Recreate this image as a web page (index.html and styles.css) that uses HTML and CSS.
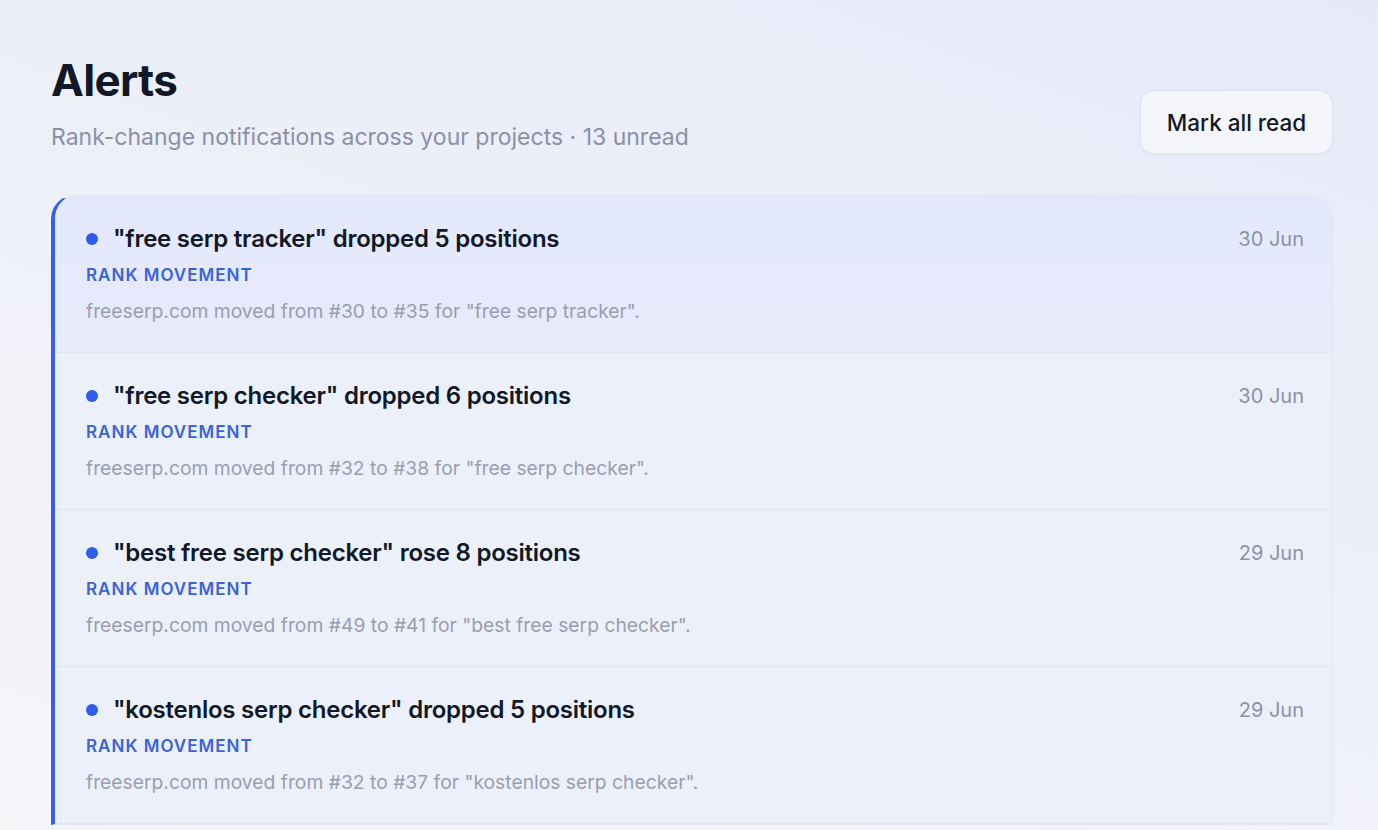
FILE: index.html
```html
<!DOCTYPE html>
<html lang="en">
<head>
<meta charset="utf-8">
<title>Alerts</title>
<link rel="stylesheet" href="styles.css">
</head>
<body>
<main class="page">
  <header class="header">
    <div class="header-text">
      <h1 class="title">Alerts</h1>
      <p class="subtitle">Rank-change notifications across your projects · 13 unread</p>
    </div>
    <button class="btn">Mark all read</button>
  </header>
  <section class="card">
    <article class="row row-active">
      <div class="row-main">
        <div class="row-title"><span class="dot"></span>"free serp tracker" dropped 5 positions</div>
        <div class="row-label">RANK MOVEMENT</div>
        <div class="row-body">freeserp.com moved from #30 to #35 for "free serp tracker".</div>
      </div>
      <div class="row-date">30 Jun</div>
    </article>
    <article class="row">
      <div class="row-main">
        <div class="row-title"><span class="dot"></span>"free serp checker" dropped 6 positions</div>
        <div class="row-label">RANK MOVEMENT</div>
        <div class="row-body">freeserp.com moved from #32 to #38 for "free serp checker".</div>
      </div>
      <div class="row-date">30 Jun</div>
    </article>
    <article class="row">
      <div class="row-main">
        <div class="row-title"><span class="dot"></span>"best free serp checker" rose 8 positions</div>
        <div class="row-label">RANK MOVEMENT</div>
        <div class="row-body">freeserp.com moved from #49 to #41 for "best free serp checker".</div>
      </div>
      <div class="row-date">29 Jun</div>
    </article>
    <article class="row">
      <div class="row-main">
        <div class="row-title"><span class="dot"></span>"kostenlos serp checker" dropped 5 positions</div>
        <div class="row-label">RANK MOVEMENT</div>
        <div class="row-body">freeserp.com moved from #32 to #37 for "kostenlos serp checker".</div>
      </div>
      <div class="row-date">29 Jun</div>
    </article>
  </section>
</main>
</body>
</html>
```
FILE: styles.css
```css
* { box-sizing: border-box; }
html, body { margin: 0; padding: 0; }
body {
  font-family: Inter, "Noto Sans", "Liberation Sans", sans-serif;
  background: linear-gradient(200deg, #e6eaf8 0%, #eef0f8 45%, #f5f6f8 100%);
  height: 830px;
  color: #111827;
  overflow: hidden;
}
.page {
  padding: 54px 45px 0 51px;
}
.header {
  display: flex;
  justify-content: space-between;
  align-items: flex-end;
}
.title {
  margin: 0;
  font-size: 44px;
  line-height: 52px;
  font-weight: 700;
  letter-spacing: -0.015em;
  color: #111827;
}
.subtitle {
  margin: 16px 0 0;
  font-size: 23px;
  line-height: 30px;
  color: #8a91a5;
}
.btn {
  font-family: inherit;
  font-size: 22.5px;
  font-weight: 500;
  color: #111827;
  background: #f4f6fc;
  border: 1px solid #e0e4ee;
  border-radius: 14px;
  width: 193px;
  height: 64px;
  margin-bottom: -2px;
  box-shadow: 0 1px 2px rgba(20, 30, 60, 0.04);
}
.card {
  margin-top: 43px;
  border: 1px solid #e2e6f2;
  border-left: 4px solid #3461e8;
  border-radius: 24px 24px 0 0;
  background: #ecf0fb;
  overflow: hidden;
}
.row {
  display: flex;
  justify-content: space-between;
  align-items: flex-start;
  padding: 28px 28px 29px 31px;
  border-bottom: 1px solid #e2e6f1;
}
.row-active {
  background: linear-gradient(180deg, #e3e8fc 0%, #e7ebfb 100%);
}
.row-title {
  display: flex;
  align-items: center;
  gap: 15px;
  font-size: 24px;
  line-height: 30px;
  font-weight: 600;
  color: #111827;
  letter-spacing: -0.01em;
}
.dot {
  width: 12px;
  height: 12px;
  border-radius: 50%;
  background: #2f5cf0;
  flex: none;
}
.row-label {
  margin-top: 9px;
  font-size: 17px;
  line-height: 24px;
  font-weight: 600;
  letter-spacing: 0.06em;
  color: #3b63d8;
}
.row-body {
  margin-top: 12px;
  font-size: 19.3px;
  line-height: 24px;
  color: #999eaf;
}
.row-date {
  font-size: 20px;
  line-height: 30px;
  color: #8c92a3;
}
```
